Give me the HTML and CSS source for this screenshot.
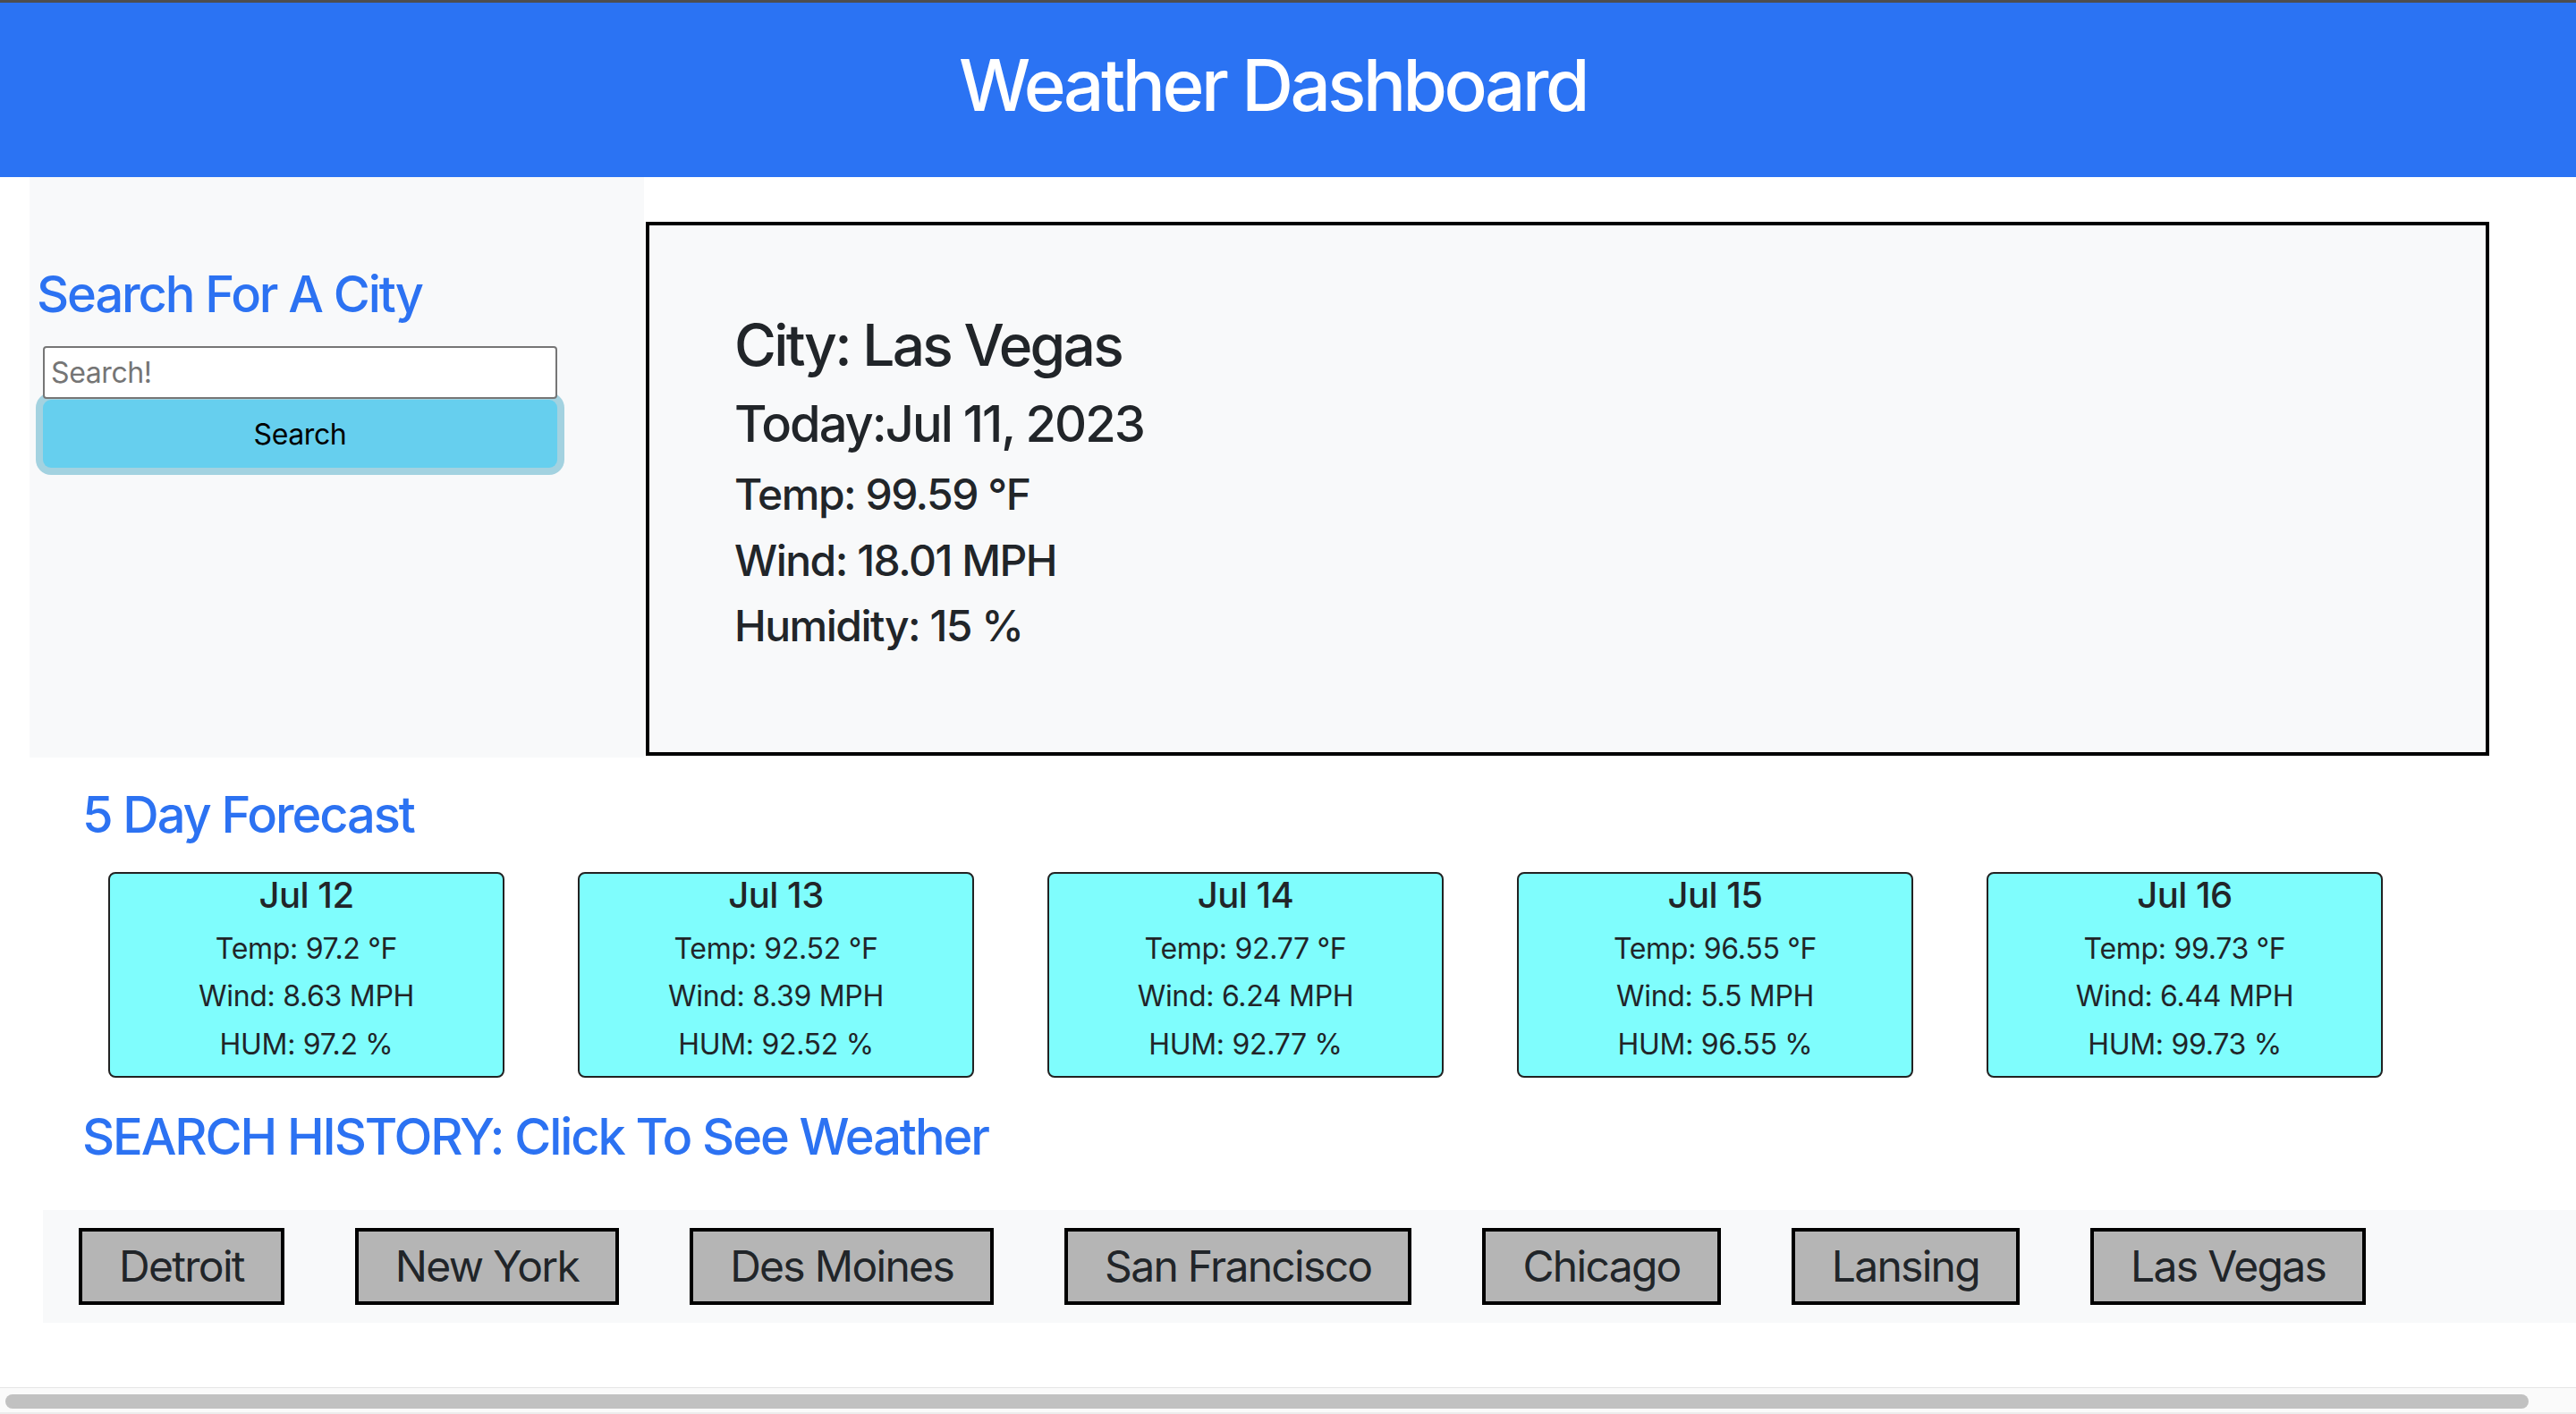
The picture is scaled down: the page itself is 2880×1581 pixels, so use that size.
FILE: index.html
```html
<!DOCTYPE html>
<html lang="en">
<head>
<meta charset="utf-8">
<title>Weather Dashboard</title>
<link rel="stylesheet" href="styles.css">
</head>
<body>
<header class="topbar">
  <h1 class="title">Weather Dashboard</h1>
</header>

<div class="main-row">
  <aside class="sidebar">
    <h3 class="heading sidebar-heading">Search For A City</h3>
    <input class="search-input" type="text" placeholder="Search!">
    <button class="search-btn" type="button">Search</button>
  </aside>
  <section class="today">
    <h2 class="today-city">City: Las Vegas</h2>
    <h3 class="today-date">Today:Jul 11, 2023</h3>
    <h4 class="today-stat">Temp: 99.59 °F</h4>
    <h4 class="today-stat">Wind: 18.01 MPH</h4>
    <h4 class="today-stat">Humidity: 15 %</h4>
  </section>
</div>

<section class="forecast">
  <h3 class="heading section-heading">5 Day Forecast</h3>
  <div class="cards">
    <div class="card">
      <h5 class="card-date">Jul 12</h5>
      <p class="card-line">Temp: 97.2 °F</p>
      <p class="card-line">Wind: 8.63 MPH</p>
      <p class="card-line">HUM: 97.2 %</p>
    </div>
    <div class="card">
      <h5 class="card-date">Jul 13</h5>
      <p class="card-line">Temp: 92.52 °F</p>
      <p class="card-line">Wind: 8.39 MPH</p>
      <p class="card-line">HUM: 92.52 %</p>
    </div>
    <div class="card">
      <h5 class="card-date">Jul 14</h5>
      <p class="card-line">Temp: 92.77 °F</p>
      <p class="card-line">Wind: 6.24 MPH</p>
      <p class="card-line">HUM: 92.77 %</p>
    </div>
    <div class="card">
      <h5 class="card-date">Jul 15</h5>
      <p class="card-line">Temp: 96.55 °F</p>
      <p class="card-line">Wind: 5.5 MPH</p>
      <p class="card-line">HUM: 96.55 %</p>
    </div>
    <div class="card">
      <h5 class="card-date">Jul 16</h5>
      <p class="card-line">Temp: 99.73 °F</p>
      <p class="card-line">Wind: 6.44 MPH</p>
      <p class="card-line">HUM: 99.73 %</p>
    </div>
  </div>
</section>

<section class="history">
  <h3 class="heading section-heading history-heading">SEARCH HISTORY: Click To See Weather</h3>
  <div class="history-bar">
    <button class="city-btn" type="button">Detroit</button>
    <button class="city-btn" type="button">New York</button>
    <button class="city-btn" type="button">Des Moines</button>
    <button class="city-btn" type="button">San Francisco</button>
    <button class="city-btn" type="button">Chicago</button>
    <button class="city-btn" type="button">Lansing</button>
    <button class="city-btn" type="button">Las Vegas</button>
  </div>
</section>

<div class="hscroll"><div class="hscroll-thumb"></div></div>
</body>
</html>
```

FILE: styles.css
```css
* { box-sizing: border-box; }

html, body {
  margin: 0;
  padding: 0;
  overflow: hidden;
}

body {
  font-family: Inter, "Noto Sans", "Liberation Sans", sans-serif;
  color: #212529;
  background: #ffffff;
  width: 2880px;
  height: 1581px;
  position: relative;
}

/* Header */
.topbar {
  height: 198px;
  border-top: 3px solid #4d4d4f;
  background: #2b73f3;
  display: flex;
  align-items: center;
  justify-content: center;
  padding: 0 34px 12px 0;
}

.title {
  margin: 0;
  color: #ffffff;
  font-size: 80px;
  font-weight: 500;
  line-height: 1.2;
  letter-spacing: -3.5px;
}

.heading {
  margin: 0;
  color: #2c72f2;
  font-size: 56px;
  font-weight: 500;
  line-height: 1.2;
  letter-spacing: -2.1px;
}

/* Top row */
.main-row {
  display: flex;
  align-items: stretch;
  padding-left: 33px;
}

.sidebar {
  width: 687px;
  background: #f8f9fa;
  padding-left: 8px;
}

.sidebar-heading {
  margin-top: 98px;
  margin-bottom: 24px;
}

.search-input {
  display: block;
  position: relative;
  z-index: 1;
  margin-left: 7px;
  width: 575px;
  height: 59px;
  border: 2px solid #767676;
  border-radius: 4px;
  background: #ffffff;
  padding: 0 7px;
  font-family: inherit;
  font-size: 32px;
  color: #212529;
  letter-spacing: -0.4px;
}

.search-input::placeholder {
  color: #757575;
}

.search-btn {
  display: block;
  margin-left: 7px;
  margin-top: 1px;
  width: 575px;
  height: 76px;
  border: 0;
  border-radius: 9px;
  background: #66cfee;
  box-shadow: 0 0 0 8px #a3d2e0;
  font-family: inherit;
  font-size: 32px;
  color: #000000;
  letter-spacing: -0.4px;
}

.today {
  width: 2061px;
  margin: 50px 0 2px 2px;
  border: 4px solid #000000;
  background: #f8f9fa;
  padding: 96px 95px;
}

.today-city,
.today-date,
.today-stat {
  margin: 0 0 16px;
  font-weight: 500;
  line-height: 1.2;
}

.today-city { font-size: 64px; letter-spacing: -2.7px; }
.today-date { font-size: 56px; letter-spacing: -2px; }
.today-stat { font-size: 48px; letter-spacing: -1.5px; }

/* Forecast */
.forecast {
  padding-left: 92px;
}

.section-heading {
  margin-top: 31px;
  margin-bottom: 30px;
}

.cards {
  display: grid;
  grid-template-columns: repeat(5, 443px);
  column-gap: 82px;
  padding-left: 29px;
}

.card {
  height: 230px;
  border: 2px solid #222222;
  border-radius: 8px;
  background: #7ffdfd;
  text-align: center;
  padding: 0 0 9px;
}

.card-date {
  margin: 0 0 9px;
  font-size: 40px;
  font-weight: 500;
  line-height: 48px;
  letter-spacing: -0.5px;
}

.card-line {
  margin: 0;
  font-size: 32px;
  line-height: 53.5px;
  letter-spacing: -0.3px;
}

/* History */
.history-heading {
  margin-top: 33px;
  margin-bottom: 48px;
  padding-left: 92px;
}

.history-bar {
  margin-left: 48px;
  background: #f8f9fa;
  padding: 20px 0 20px 40px;
  display: flex;
  gap: 79px;
}

.city-btn {
  height: 86px;
  border: 4px solid #000000;
  border-radius: 0;
  background: #b5b5b5;
  padding: 0 41px;
  font-family: inherit;
  font-size: 48px;
  color: #212529;
  letter-spacing: -1.7px;
  line-height: 1;
}

/* Fake horizontal scrollbar */
.hscroll {
  position: absolute;
  left: 0;
  bottom: 0;
  width: 2880px;
  height: 30px;
  background: #fafafa;
  border-top: 1px solid #e6e6e6;
  border-bottom: 2px solid #ececec;
  padding: 7px 53px 0 6px;
}

.hscroll-thumb {
  height: 16px;
  border-radius: 8px;
  background: #c1c1c1;
}
```
